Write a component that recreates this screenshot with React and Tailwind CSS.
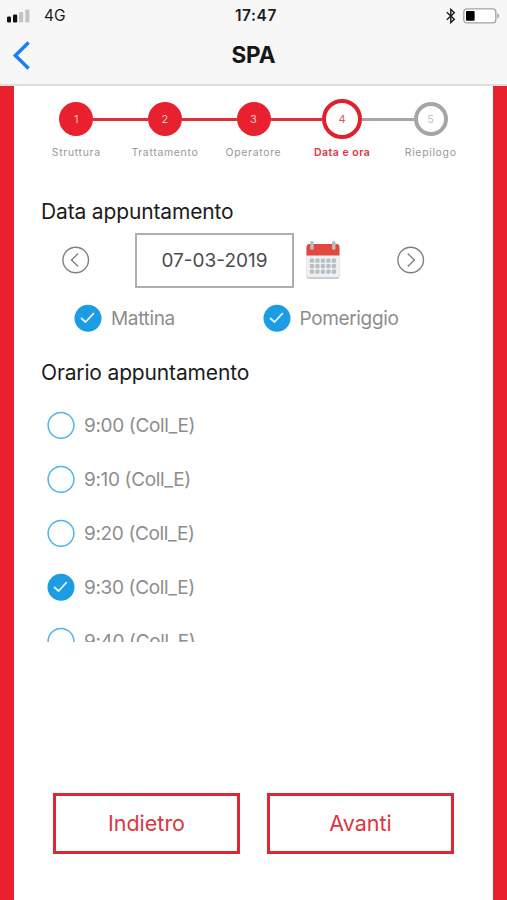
const steps = [
  { n: 1, label: 'Struttura', state: 'done' },
  { n: 2, label: 'Trattamento', state: 'done' },
  { n: 3, label: 'Operatore', state: 'done' },
  { n: 4, label: 'Data e ora', state: 'active' },
  { n: 5, label: 'Riepilogo', state: 'todo' },
]

const slots = [
  { time: '9:00 (Coll_E)' },
  { time: '9:10 (Coll_E)' },
  { time: '9:20 (Coll_E)' },
  { time: '9:30 (Coll_E)', checked: true },
  { time: '9:40 (Coll_E)' },
]

const circleStyles = {
  done: 'size-[34px] bg-[#e9202d] text-[#ffc4c6]',
  active: 'size-10 border-4 border-[#e0202d] bg-white text-[#e8505a]',
  todo: 'size-[34px] border-4 border-[#a6a6a6] bg-white text-[#c4c4c4]',
}

function StatusBar() {
  return (
    <div className="grid h-[30px] grid-cols-3 items-center pl-[7px] pr-[7px] pt-px text-[15.5px] leading-none text-[#1c1c1c]">
      <div className="flex items-center">
        <svg width="23" height="14" viewBox="0 0 23 14">
          <rect x="0" y="7.5" width="4" height="6" rx="1.2" fill="#111" />
          <rect x="6" y="5.5" width="4.2" height="8" rx="1.2" fill="#111" />
          <rect x="12" y="3" width="4.2" height="10.5" rx="1.2" fill="#c4c4c4" />
          <rect x="18.2" y="0.5" width="4.2" height="13" rx="1.2" fill="#c4c4c4" />
        </svg>
        <span className="ml-3.5">4G</span>
      </div>
      <span className="pl-[5px] text-center font-semibold tracking-[0.6px]">17:47</span>
      <div className="flex items-center justify-end">
        <svg width="10" height="16" viewBox="0 0 10 16" fill="none" stroke="#1c1c1c" strokeWidth="1.4">
          <path d="M0.8 4.3 8.3 11.3 4.8 14.6V1.4L8.3 4.7 0.8 11.7" />
        </svg>
        <svg className="ml-[7px]" width="37" height="16" viewBox="0 0 37 16">
          <rect x="0.8" y="0.8" width="32" height="14" rx="3" fill="#fff" stroke="#a3a3a3" strokeWidth="1.3" />
          <rect x="3" y="3" width="8.6" height="9.8" rx="0.8" fill="#000" />
          <path d="M34.3 5.4c2.4.5 2.4 4.3 0 4.8z" fill="#a3a3a3" />
        </svg>
      </div>
    </div>
  )
}

function Header() {
  return (
    <header className="h-[86px] border-b-2 border-[#dedede] bg-[#f7f7f7]">
      <StatusBar />
      <div className="grid h-[50px] grid-cols-3 items-center">
        <button className="w-fit pl-3">
          <svg width="19" height="29" viewBox="0 0 19 29" fill="none" stroke="#167efb" strokeWidth="3.4">
            <path d="M16.6 1.5 3.3 14.5 16.6 27.5" />
          </svg>
        </button>
        <h1 className="text-center text-[22.5px] font-bold text-[#161616]">SPA</h1>
      </div>
    </header>
  )
}

function Stepper() {
  return (
    <ol className="ml-[18px] grid w-[443px] grid-cols-5">
      {steps.map((s, i) => (
        <li key={s.n} className="flex flex-col items-center">
          <div className="flex h-10 w-full items-center">
            <span className={`h-[3px] flex-1 ${i === 0 ? '' : i === 4 ? 'bg-[#a6a6a6]' : 'bg-[#df2f3a]'}`} />
            <span className={`flex items-center justify-center rounded-full text-[11px] ${circleStyles[s.state]}`}>
              {s.n}
            </span>
            <span className={`h-[3px] flex-1 ${i === 4 ? '' : i === 3 ? 'bg-[#a6a6a6]' : 'bg-[#df2f3a]'}`} />
          </div>
          <span
            className={`mt-[6px] whitespace-nowrap text-[10.5px] leading-4 ${
              s.state === 'active'
                ? 'font-semibold tracking-[0.5px] text-[#e03340]'
                : 'tracking-[0.65px] text-[#999999]'
            }`}
          >
            {s.label}
          </span>
        </li>
      ))}
    </ol>
  )
}

function Arrow({ next, className = '' }) {
  return (
    <button className={className}>
      <svg width="28" height="28" viewBox="0 0 28 28" fill="none" stroke="#808080" strokeWidth="1.4">
        <circle cx="13.7" cy="14" r="12.8" />
        <path d={next ? 'M10.7 7.5 17.4 14 10.7 20.5' : 'M16.2 7.5 9.5 14 16.2 20.5'} />
      </svg>
    </button>
  )
}

function CalendarIcon() {
  return (
    <svg className="ml-[11px]" width="36" height="40" viewBox="0 0 36 40">
      <rect x="1.5" y="6" width="33" height="33" rx="3" fill="#c3c8ca" />
      <rect x="1.5" y="6" width="33" height="31.2" rx="3" fill="#eef0f1" />
      <path d="M1.5 15.5V7a3 3 0 0 1 3-3h27a3 3 0 0 1 3 3v8.5z" fill="#e2483f" />
      <rect x="5.2" y="1" width="3.6" height="9" rx="1.8" fill="#b9babb" />
      <rect x="27" y="1" width="3.6" height="9" rx="1.8" fill="#b9babb" />
      {[18.5, 24, 29.5].map(y =>
        [4.8, 10.3, 15.8, 21.3, 26.8].map(x => (
          <rect key={`${x}-${y}`} x={x} y={y} width="4.3" height="4.2" rx="1.3" fill="#b7bfc4" />
        ))
      )}
    </svg>
  )
}

function Check({ checked, label, className = '' }) {
  return (
    <label className={`flex items-center text-[19px] tracking-[-0.35px] text-[#8d8d8d] ${className}`}>
      <svg className="mr-[9px] shrink-0" width="28" height="28" viewBox="0 0 28 28" fill="none">
        {checked ? (
          <>
            <circle cx="14" cy="14.3" r="13.5" fill="#1c9ce3" />
            <path d="M7 14 11.5 18 19.8 9.2" stroke="#e4f6ff" strokeWidth="1.7" />
          </>
        ) : (
          <circle cx="14" cy="14.3" r="12.9" stroke="#4fb4ea" strokeWidth="1.5" />
        )}
      </svg>
      <span className="pt-[3px]">{label}</span>
    </label>
  )
}

export default function App() {
  return (
    <div className="flex h-[900px] w-[507px] flex-col overflow-hidden bg-white font-['Inter',sans-serif]">
      <Header />
      <main className="flex flex-1 flex-col border-x-[14px] border-[#e9202d] pt-[13px]">
        <Stepper />

        <h2 className="ml-[27px] mt-[35px] text-[21px] leading-8 tracking-[-0.15px] text-[#1c1c1c]">
          Data appuntamento
        </h2>
        <div className="mt-1 flex h-[56px] items-center pl-12">
          <Arrow />
          <div className="ml-[45px] flex h-[55px] w-[159px] items-center justify-center border-2 border-[#aeaeae] pt-0.5 text-[19px] text-[#4b4b4b]">
            07-03-2019
          </div>
          <CalendarIcon />
          <Arrow next className="ml-[56px]" />
        </div>
        <div className="mt-4 flex h-7 items-center pl-[60px]">
          <Check checked label="Mattina" className="w-[188.5px]" />
          <Check checked label="Pomeriggio" />
        </div>

        <h2 className="ml-[27px] mt-[25px] text-[21px] leading-8 tracking-[-0.15px] text-[#1c1c1c]">
          Orario appuntamento
        </h2>
        <div className="mt-[9px] h-[244px] overflow-hidden pl-[33px]">
          {slots.map(s => (
            <Check key={s.time} label={s.time} checked={s.checked} className="h-[54px]" />
          ))}
        </div>

        <div className="mb-[46px] ml-[39px] mt-auto flex gap-[27px]">
          {['Indietro', 'Avanti'].map(label => (
            <button
              key={label}
              className="h-[61px] w-[187px] border-[3px] border-[#de2733] text-[21.5px] text-[#dc3641]"
            >
              {label}
            </button>
          ))}
        </div>
      </main>
    </div>
  )
}
